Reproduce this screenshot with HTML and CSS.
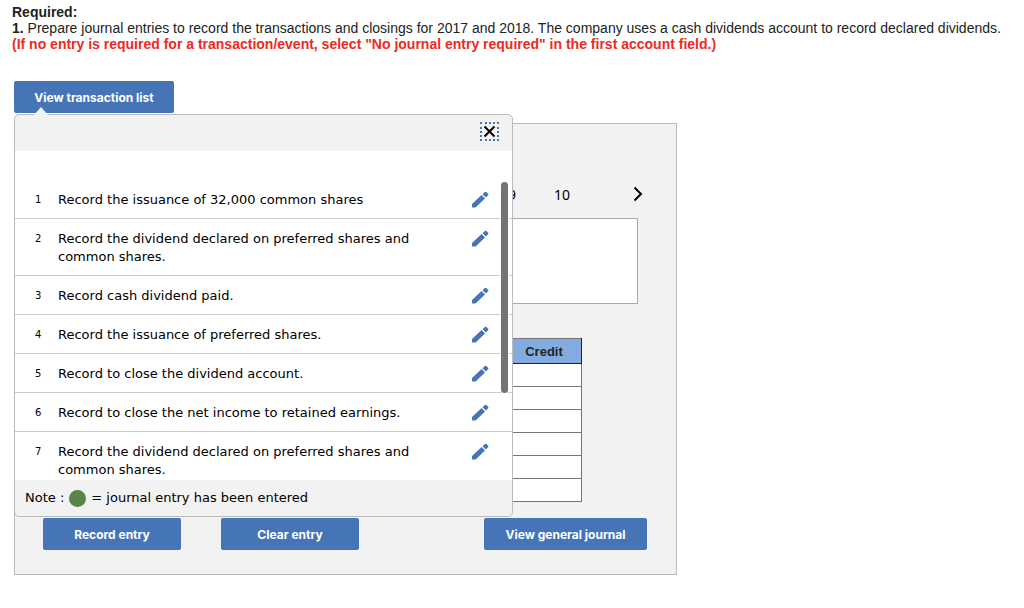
FILE: index.html
```html
<!DOCTYPE html>
<html lang="en">
<head>
    <meta charset="UTF-8">
    <meta name="viewport" content="width=device-width, initial-scale=1.0">
    <title>Journal entries</title>
    <link rel="stylesheet" href="styles.css">
</head>
<body>
  <svg class="sprite" aria-hidden="true">
    <symbol id="pencil" viewBox="0 0 18 18">
      <path d="M1 16.5V13L10.6 4L14 7.4L4.6 16.5Z"/>
      <path d="M11.5 3.2L13.9 1Q14.7 0.4 15.4 1.1L17.1 2.7Q17.8 3.4 17.1 4.2L14.9 6.5Z"/>
    </symbol>
  </svg>

  <div class="instructions">
    <p><b>Required:</b></p>
    <p><b>1.</b> Prepare journal entries to record the transactions and closings for 2017 and 2018. The company uses a cash dividends account to record declared dividends. <b class="warning">(If no entry is required for a transaction/event, select "No journal entry required" in the first account field.)</b></p>
  </div>

  <div class="worksheet">
    <div class="list-menu">
      <button type="button" class="btn btn-list">View transaction list</button>

      <div class="popover">
        <div class="popover-header">
          <button type="button" class="close-btn" aria-label="Close">
            <svg width="13" height="13" viewBox="0 0 13 13"><path d="M1.5 1.5L11.5 11.5M11.5 1.5L1.5 11.5"/></svg>
          </button>
        </div>

        <div class="popover-body">
          <ol class="transactions">
            <li><span class="number">1</span><span class="text">Record the issuance of 32,000 common shares</span><button type="button" class="edit-btn" aria-label="Edit"><svg><use href="#pencil"/></svg></button></li>
            <li><span class="number">2</span><span class="text">Record the dividend declared on preferred shares and common shares.</span><button type="button" class="edit-btn" aria-label="Edit"><svg><use href="#pencil"/></svg></button></li>
            <li><span class="number">3</span><span class="text">Record cash dividend paid.</span><button type="button" class="edit-btn" aria-label="Edit"><svg><use href="#pencil"/></svg></button></li>
            <li><span class="number">4</span><span class="text">Record the issuance of preferred shares.</span><button type="button" class="edit-btn" aria-label="Edit"><svg><use href="#pencil"/></svg></button></li>
            <li><span class="number">5</span><span class="text">Record to close the dividend account.</span><button type="button" class="edit-btn" aria-label="Edit"><svg><use href="#pencil"/></svg></button></li>
            <li><span class="number">6</span><span class="text">Record to close the net income to retained earnings.</span><button type="button" class="edit-btn" aria-label="Edit"><svg><use href="#pencil"/></svg></button></li>
            <li><span class="number">7</span><span class="text">Record the dividend declared on preferred shares and common shares.</span><button type="button" class="edit-btn" aria-label="Edit"><svg><use href="#pencil"/></svg></button></li>
          </ol>
          <div class="scroll-thumb"></div>
        </div>

        <div class="note">Note : <span class="dot"></span> = journal entry has been entered</div>
      </div>
    </div>

    <div class="panel">
      <div class="pager">
        <button type="button" class="page">9</button>
        <button type="button" class="page">10</button>
        <button type="button" class="next" aria-label="Next">
          <svg width="10" height="16" viewBox="0 0 10 16"><path d="M1.5 1.5L8 8L1.5 14.5"/></svg>
        </button>
      </div>

      <div class="description"></div>

      <table class="journal">
        <thead>
          <tr><th>Credit</th></tr>
        </thead>
        <tbody>
          <tr><td></td></tr>
          <tr><td></td></tr>
          <tr><td></td></tr>
          <tr><td></td></tr>
          <tr><td></td></tr>
          <tr><td></td></tr>
        </tbody>
      </table>

      <div class="actions">
        <button type="button" class="btn">Record entry</button>
        <button type="button" class="btn">Clear entry</button>
        <button type="button" class="btn btn-journal">View general journal</button>
      </div>
    </div>
  </div>
</body>
</html>
```

FILE: styles.css
```css
* {
  box-sizing: border-box;
}

body {
  margin: 0;
  padding: 4px 12px 32px;
  font-family: "Liberation Sans", Arial, sans-serif;
  font-size: 14px;
  color: #222;
  background-color: #fff;
}

button {
  padding: 0;
  border: none;
  background: none;
  cursor: pointer;
}

.sprite {
  position: absolute;
  width: 0;
  height: 0;
}

/* Instructions */
.instructions {
  line-height: 16px;
}

.instructions p {
  margin: 0;
}

.warning {
  display: block;
  color: #ee2a20;
}

.worksheet {
  max-width: 663px;
  margin: 29px 0 0 2px;
}

/* Buttons */
.btn {
  width: 138px;
  height: 32px;
  border-radius: 2px;
  background-color: #4575b6;
  color: #fff;
  font-family: Inter, Roboto, sans-serif;
  font-size: 12px;
  font-weight: 700;
}

.btn-list {
  display: block;
  width: 160px;
}

.btn-journal {
  width: 163px;
  margin-left: auto;
}

/* Transaction list */
.list-menu {
  position: relative;
}

.popover {
  position: absolute;
  top: 33px;
  left: 0;
  z-index: 1;
  width: 499px;
  border: 1px solid #bbb;
  border-radius: 5px;
  background-color: #f2f2f2;
  font-family: Verdana, "DejaVu Sans", sans-serif;
  font-size: 13px;
  line-height: 18px;
  color: #000;
}

.popover::before {
  content: "";
  position: absolute;
  top: -8px;
  left: 19px;
  border: solid transparent;
  border-width: 0 7px 8px;
  border-bottom-color: #f2f2f2;
}

.popover-header {
  display: flex;
  justify-content: flex-end;
  padding: 7px 13px 10px;
}

.close-btn {
  display: flex;
  align-items: center;
  justify-content: center;
  width: 19px;
  height: 19px;
  border: 2px dotted #4575b6;
}

.close-btn path {
  fill: none;
  stroke: #000;
  stroke-width: 2;
}

.popover-body {
  position: relative;
  height: 329px;
  padding-top: 29px;
  overflow: hidden;
  background-color: #fff;
}

.transactions {
  margin: 0;
  padding: 0;
  list-style: none;
}

.transactions li {
  display: flex;
  align-items: flex-start;
  padding: 11px 23px 9px 20px;
  border-bottom: 1px solid #ccc;
}

.number {
  width: 23px;
  font-size: 10px;
}

.text {
  width: 365px;
}

.edit-btn {
  width: 18px;
  height: 18px;
  margin-left: auto;
}

.edit-btn svg {
  display: block;
  width: 18px;
  height: 18px;
  fill: #4575b6;
}

.scroll-thumb {
  position: absolute;
  top: 31px;
  right: 4px;
  width: 7px;
  height: 211px;
  border-radius: 4px;
  background-color: #737373;
  box-shadow: 0 0 0 1px #fff;
}

.note {
  display: flex;
  align-items: center;
  gap: 5px;
  padding: 9px 10px;
}

.dot {
  width: 17px;
  height: 17px;
  border-radius: 50%;
  background-color: #5a8549;
}

/* Journal entry panel */
.panel {
  margin-top: 10px;
  padding: 58px 29px 24px 28px;
  border: 1px solid #bbb;
  background-color: #f2f2f2;
}

.pager {
  display: flex;
  align-items: flex-start;
  justify-content: flex-end;
  height: 25px;
  margin-right: 4px;
}

.page {
  margin-right: 38px;
  font-family: "Noto Sans", sans-serif;
  font-size: 14px;
  line-height: 26px;
  color: #000;
}

.page:nth-child(2) {
  margin-right: 63px;
}

.next {
  padding-top: 4px;
}

.next svg {
  display: block;
  fill: none;
  stroke: #000;
  stroke-width: 2;
}

.description {
  height: 86px;
  margin: 11px 9px 0 0;
  border: 1px solid #aaa;
  background-color: #fff;
}

.journal {
  width: 76px;
  margin: 34px 65px 0 auto;
  border-collapse: collapse;
}

.journal th {
  height: 25px;
  padding: 0;
  border: 1px solid #222;
  border-top-color: #777;
  background-color: #82ace0;
  font-size: 13px;
}

.journal td {
  height: 23px;
  padding: 0;
  border: 1px solid #777;
  background-color: #fff;
}

.actions {
  display: flex;
  gap: 40px;
  margin-top: 16px;
}
```
